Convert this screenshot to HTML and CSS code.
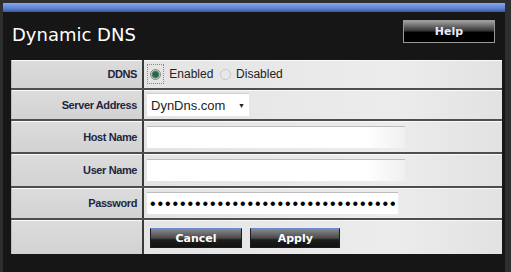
FILE: index.html
```html
<!DOCTYPE html>
<html lang="en">
<head>
    <meta charset="UTF-8">
    <title>Dynamic DNS</title>
    <link rel="stylesheet" href="styles.css">
</head>
<body>
<div class="panel">
    <div class="topbar"></div>
    <div class="header">
        <h1 class="title">Dynamic DNS</h1>
        <a class="btn help-btn" href="#">Help</a>
    </div>

    <table class="form-table">
        <tr class="row-ddns">
            <td class="label">DDNS</td>
            <td class="field">
                <span class="radio-focus"><span class="radio checked"></span></span>
                <span class="radio-text">Enabled</span>
                <span class="radio"></span>
                <span class="radio-text">Disabled</span>
            </td>
        </tr>
        <tr class="row-server">
            <td class="label">Server Address</td>
            <td class="field">
                <div class="select"><span>DynDns.com</span><span class="arrow">&#9660;</span></div>
            </td>
        </tr>
        <tr class="row-host">
            <td class="label">Host Name</td>
            <td class="field"><input class="text-box wide" type="text"></td>
        </tr>
        <tr class="row-user">
            <td class="label">User Name</td>
            <td class="field"><input class="text-box wide" type="text"></td>
        </tr>
        <tr class="row-pass">
            <td class="label">Password</td>
            <td class="field"><input class="text-box pass" type="password" value="0123456789012345678901234567890123"></td>
        </tr>
        <tr class="row-btns">
            <td class="label"></td>
            <td class="field">
                <button class="btn form-btn">Cancel</button>
                <button class="btn form-btn apply">Apply</button>
            </td>
        </tr>
    </table>
</div>
</body>
</html>
```

FILE: styles.css
```css
html, body{
    margin: 0;
    height: 100%;
}
body{
    background-color: #2e2e2e;
    padding: 3px 6px 0 3px;
    box-sizing: border-box;
    font-family: "Liberation Sans", Arial, sans-serif;
}

.panel{
    background-color: #161616;
    height: 100%;
}

.topbar{
    height: 9px;
    background: linear-gradient(#8aa8e8, #5a80d0 60%, #3c5aa0);
}

/* ----------------------------- HEADER ------------------------------ */
.header{
    display: flex;
    align-items: center;
    justify-content: space-between;
    height: 48px;
    padding: 0 10px 0 9px;
}
.title{
    margin: -3px 0 0;
    font-family: "DejaVu Sans", sans-serif;
    font-weight: normal;
    font-size: 18px;
    color: #fff;
}

.btn{
    display: inline-block;
    font-family: "DejaVu Sans", sans-serif;
    font-weight: bold;
    font-size: 11px;
    color: #fff;
    text-decoration: none;
    text-align: center;
    cursor: pointer;
}
.help-btn{
    width: 90px;
    height: 21px;
    line-height: 21px;
    margin-top: -9px;
    border: 1px solid #9a9a9a;
    background: linear-gradient(#a0a0a0, #3a3a3a 45%, #000 55%, #000);
    color: #e8e8ff;
}

/* ----------------------------- TABLE ------------------------------ */
.form-table{
    width: 491px;
    margin-left: 8px;
    border-collapse: collapse;
    border-left: 1px solid #bdbdbd;
}
.form-table td{
    padding: 0;
    border-bottom: 2px solid #4e4e4e;
    box-shadow: inset 0 1px 0 #fafafa;
}
.form-table tr:last-child td{
    border-bottom: none;
}
.label{
    width: 125px;
    padding-right: 5px !important;
    text-align: right;
    font-size: 11px;
    font-weight: bold;
    color: #1d2640;
    letter-spacing: -0.4px;
    background: linear-gradient(#dcdcdc, #d2d2d2);
    border-right: 2px solid #3a3a3a;
}
.field{
    padding-left: 3px !important;
    background: linear-gradient(90deg, #e4e4e4, #ececec 70%, #e2e2e2);
    font-size: 12px;
    color: #222;
}

.row-ddns td{ height: 28px; }
.row-server td{ height: 29px; }
.row-host td{ height: 31px; }
.row-user td{ height: 32px; }
.row-pass td{ height: 30px; }
.row-btns td{ height: 34px; }

/* radios */
.field .radio-focus{
    display: inline-block;
    vertical-align: middle;
    padding: 2px;
    border: 1px dotted #888;
}
.radio{
    display: inline-block;
    vertical-align: middle;
    width: 9px;
    height: 9px;
    border-radius: 50%;
    border: 1px solid #c8c8c8;
    background: #e8e8e8;
}
.radio.checked{
    background: radial-gradient(#2a6a3a 35%, #5a8a8a 55%, #dcdcdc 70%);
    border-color: #888;
}
.radio-text{
    vertical-align: middle;
    margin: 0 3px 0 2px;
}

/* select */
.select{
    display: flex;
    justify-content: space-between;
    align-items: center;
    width: 94px;
    height: 22px;
    padding: 0 4px;
    background: #fff;
    border-top: 1px solid #d0d0d0;
    font-size: 13px;
    color: #222;
}
.select .arrow{
    font-size: 7px;
}

/* text inputs */
.text-box{
    outline: none;
    border: none;
    border-top: 1px solid #bdbdbd;
    height: 22px;
    padding: 0 3px;
    box-sizing: border-box;
    background: linear-gradient(90deg, #fff, #fff 85%, #f0f0f0);
    font-family: "Liberation Sans", sans-serif;
    vertical-align: middle;
}
.wide{
    width: 258px;
}
.pass{
    width: 251px;
    background: #fff;
    font-size: 16px;
    letter-spacing: 1.9px;
}

/* form buttons */
.form-btn{
    width: 92px;
    height: 20px;
    margin: 2px 2px 0 3px;
    padding: 0;
    border: 1px solid #1a1a2a;
    border-top: 1px solid #6a8ad8;
    background: linear-gradient(#8a8a8a, #4a4a4a 50%, #1e1e1e 60%, #111);
}
.form-btn.apply{
    width: 90px;
}
```
